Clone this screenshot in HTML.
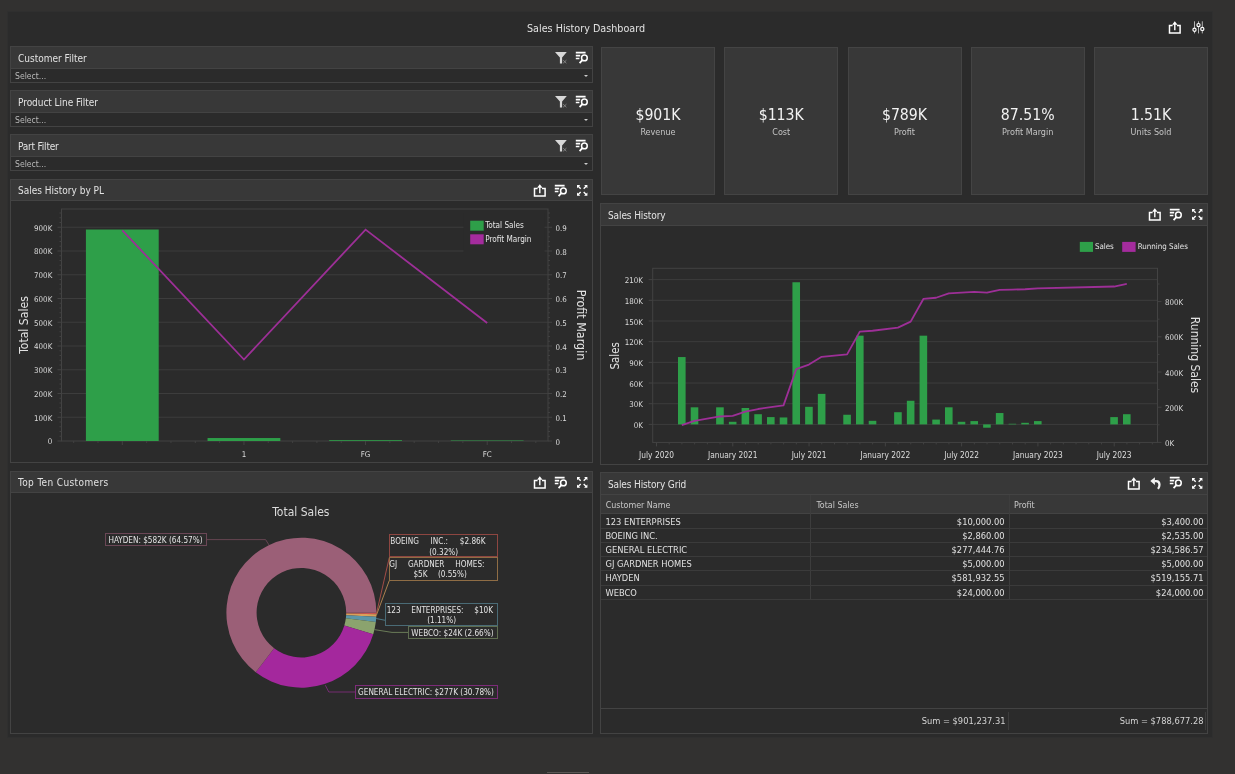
<!DOCTYPE html>
<html><head><meta charset="utf-8"><title>Sales History Dashboard</title>
<style>
html,body{margin:0;padding:0}
body{width:1235px;height:774px;background:#323130;overflow:hidden;position:relative;font-family:"DejaVu Sans Condensed", "Liberation Sans", sans-serif;color:#dedede;font-size:10px}
#inner{position:absolute;left:7px;top:11px;width:1204px;height:725px;background:#2b2b2b;border:1px solid #2f2f2f}
.panel{position:absolute;box-sizing:border-box;border:1px solid #434343;background:#2b2b2b}
.hdr{position:absolute;left:0;top:0;right:0;height:21px;background:#383838;border-bottom:1px solid #434343}
.hdr span{position:absolute;left:7px;top:5px;font-size:10px;line-height:14px;color:#e2e2e2;white-space:nowrap}
.ic{position:absolute;overflow:visible}
.sel{position:absolute;left:0;right:0;top:22px;height:13px;font-size:8.6px;line-height:15px;color:#b9b9b9;padding-left:4px}
.arrow{position:absolute;right:4px;top:5.8px;width:0;height:0;border-left:2.5px solid transparent;border-right:2.5px solid transparent;border-top:2.5px solid #ccc}
.card{position:absolute;top:47px;width:114px;height:148px;box-sizing:border-box;background:#383838;border:1px solid #444;text-align:center}
.card b{display:block;font-weight:normal;font-size:15.7px;line-height:19px;margin-top:57px;color:#f2f2f2}
.card i{display:block;font-style:normal;font-size:9px;line-height:12px;margin-top:2px;color:#c4c4c4}
svg text{font-family:"DejaVu Sans Condensed", "Liberation Sans", sans-serif}
.lbl{position:absolute;box-sizing:border-box;border:1px solid;font-size:8.15px;line-height:10.6px;color:#e4e4e4;padding:0.8px 2px 0 2px;white-space:nowrap;background:#2b2b2b}
.gh{position:absolute;top:22px;height:18px;line-height:20px;font-size:8.85px;color:#c8c8c8;white-space:nowrap}
.gr{position:absolute;left:0;width:606px;height:13.22px;border-bottom:1px solid #3b3b3b;font-size:9.25px;line-height:14.6px;color:#e0e0e0;white-space:nowrap}
.gr span{position:absolute;top:0}
</style></head><body>
<div id="root" style="position:absolute;left:0;top:0;width:1235px;height:774px;will-change:transform">
<div id="inner"></div>
<div style="position:absolute;left:527px;top:22px;font-size:10.7px;line-height:14px;color:#e2e2e2;white-space:nowrap">Sales History Dashboard</div>

<svg class="ic" style="left:1168px;top:21px" width="14" height="14" viewBox="0 0 14 14"><path d="M4.6 4.4H1.5v7.6h10.6V4.4H9" fill="none" stroke="#fff" stroke-width="1.5"/><path d="M6.8 9.2V2.2" stroke="#fff" stroke-width="1.4" fill="none"/><path d="M4.1 3.7L6.8 0.2L9.5 3.7Z" fill="#fff"/></svg>
<svg class="ic" style="left:1192px;top:21px" width="14" height="13" viewBox="0 0 14 13"><path d="M2.5 0.3V12.4M6.5 0.3V12.4M10.3 0.3V12.4" stroke="#c4c4c4" stroke-width="0.9"/><circle cx="2.5" cy="8.8" r="1.6" fill="#2b2b2b" stroke="#fff" stroke-width="1.2"/><circle cx="6.5" cy="4.1" r="1.6" fill="#2b2b2b" stroke="#fff" stroke-width="1.2"/><circle cx="10.3" cy="7.9" r="1.6" fill="#2b2b2b" stroke="#fff" stroke-width="1.2"/></svg>
<div class="panel" style="left:10px;top:46px;width:583px;height:37px"><div class="hdr"><span style="letter-spacing:0px">Customer Filter</span><svg class="ic" style="left:544px;top:5px" width="13" height="12" viewBox="0 0 13 12"><path d="M0 0H11.8L7.1 5.6V11.4H4.9V5.6Z" fill="#d8d8d8"/><path d="M8.2 8.2L11.4 11.2M11.4 8.2L8.2 11.2" stroke="#8a8a8a" stroke-width="0.9"/></svg><svg class="ic" style="left:564px;top:3.6px" width="14" height="14" viewBox="0 0 14 14"><path d="M0.8 1.6H10.6M0.8 4.6H5.2M0.8 7.5H4.4" stroke="#fff" stroke-width="1.6" fill="none"/><circle cx="9.4" cy="6.9" r="2.85" fill="none" stroke="#fff" stroke-width="1.5"/><path d="M7.3 9.2L4.6 12.2" stroke="#fff" stroke-width="1.8" fill="none"/></svg></div><div class="sel">Select...<div class="arrow"></div></div></div>
<div class="panel" style="left:10px;top:90px;width:583px;height:37px"><div class="hdr"><span style="letter-spacing:-0.05px">Product Line Filter</span><svg class="ic" style="left:544px;top:5px" width="13" height="12" viewBox="0 0 13 12"><path d="M0 0H11.8L7.1 5.6V11.4H4.9V5.6Z" fill="#d8d8d8"/><path d="M8.2 8.2L11.4 11.2M11.4 8.2L8.2 11.2" stroke="#8a8a8a" stroke-width="0.9"/></svg><svg class="ic" style="left:564px;top:3.6px" width="14" height="14" viewBox="0 0 14 14"><path d="M0.8 1.6H10.6M0.8 4.6H5.2M0.8 7.5H4.4" stroke="#fff" stroke-width="1.6" fill="none"/><circle cx="9.4" cy="6.9" r="2.85" fill="none" stroke="#fff" stroke-width="1.5"/><path d="M7.3 9.2L4.6 12.2" stroke="#fff" stroke-width="1.8" fill="none"/></svg></div><div class="sel">Select...<div class="arrow"></div></div></div>
<div class="panel" style="left:10px;top:134px;width:583px;height:37px"><div class="hdr"><span style="letter-spacing:-0.2px">Part Filter</span><svg class="ic" style="left:544px;top:5px" width="13" height="12" viewBox="0 0 13 12"><path d="M0 0H11.8L7.1 5.6V11.4H4.9V5.6Z" fill="#d8d8d8"/><path d="M8.2 8.2L11.4 11.2M11.4 8.2L8.2 11.2" stroke="#8a8a8a" stroke-width="0.9"/></svg><svg class="ic" style="left:564px;top:3.6px" width="14" height="14" viewBox="0 0 14 14"><path d="M0.8 1.6H10.6M0.8 4.6H5.2M0.8 7.5H4.4" stroke="#fff" stroke-width="1.6" fill="none"/><circle cx="9.4" cy="6.9" r="2.85" fill="none" stroke="#fff" stroke-width="1.5"/><path d="M7.3 9.2L4.6 12.2" stroke="#fff" stroke-width="1.8" fill="none"/></svg></div><div class="sel">Select...<div class="arrow"></div></div></div>
<div class="card" style="left:601.00px"><b>$901K</b><i>Revenue</i></div>
<div class="card" style="left:724.25px"><b>$113K</b><i>Cost</i></div>
<div class="card" style="left:847.50px"><b>$789K</b><i>Profit</i></div>
<div class="card" style="left:970.75px"><b>87.51%</b><i>Profit Margin</i></div>
<div class="card" style="left:1094.00px"><b>1.51K</b><i>Units Sold</i></div>
<div class="panel" style="left:10px;top:179px;width:583px;height:284px"><div class="hdr" style="height:20px"><span style="top:4px">Sales History by PL</span><svg class="ic" style="left:522.2px;top:3.7px" width="14" height="14" viewBox="0 0 14 14"><path d="M4.6 4.4H1.5v7.6h10.6V4.4H9" fill="none" stroke="#fff" stroke-width="1.5"/><path d="M6.8 9.2V2.2" stroke="#fff" stroke-width="1.4" fill="none"/><path d="M4.1 3.7L6.8 0.2L9.5 3.7Z" fill="#fff"/></svg><svg class="ic" style="left:543px;top:3.8px" width="14" height="14" viewBox="0 0 14 14"><path d="M0.8 1.6H10.6M0.8 4.6H5.2M0.8 7.5H4.4" stroke="#fff" stroke-width="1.6" fill="none"/><circle cx="9.4" cy="6.9" r="2.85" fill="none" stroke="#fff" stroke-width="1.5"/><path d="M7.3 9.2L4.6 12.2" stroke="#fff" stroke-width="1.8" fill="none"/></svg><svg class="ic" style="left:565.9px;top:5.0px" width="10.4" height="10.8" viewBox="0 0 10.4 10.8"><path d="M0 0H3.3L0 3.3ZM10.4 0V3.3L7.1000000000000005 0ZM0 10.8V7.500000000000001L3.3 10.8ZM10.4 10.8H7.1000000000000005L10.4 7.500000000000001Z" fill="#fff"/><path d="M1 1L3.7 3.7M9.4 1L6.7 3.7M1 9.8L3.7 7.1000000000000005M9.4 9.8L6.7 7.1000000000000005" stroke="#fff" stroke-width="1.4"/></svg></div>
<svg style="position:absolute;left:0;top:0" width="581" height="282" viewBox="0 0 581 282"><line x1="50.5" x2="537" y1="237.25" y2="237.25" stroke="#3d3d3d" stroke-width="1"/><line x1="50.5" x2="537" y1="213.5" y2="213.5" stroke="#3d3d3d" stroke-width="1"/><line x1="50.5" x2="537" y1="189.75" y2="189.75" stroke="#3d3d3d" stroke-width="1"/><line x1="50.5" x2="537" y1="166.0" y2="166.0" stroke="#3d3d3d" stroke-width="1"/><line x1="50.5" x2="537" y1="142.25" y2="142.25" stroke="#3d3d3d" stroke-width="1"/><line x1="50.5" x2="537" y1="118.5" y2="118.5" stroke="#3d3d3d" stroke-width="1"/><line x1="50.5" x2="537" y1="94.75" y2="94.75" stroke="#3d3d3d" stroke-width="1"/><line x1="50.5" x2="537" y1="71.0" y2="71.0" stroke="#3d3d3d" stroke-width="1"/><line x1="50.5" x2="537" y1="47.25" y2="47.25" stroke="#3d3d3d" stroke-width="1"/><rect x="50.5" y="29" width="486.5" height="232" fill="none" stroke="#434343" stroke-width="1"/><line x1="46.5" x2="50.5" y1="261.0" y2="261.0" stroke="#434343"/><line x1="537" x2="541" y1="261.0" y2="261.0" stroke="#434343"/><text x="41.3" y="264.4" font-size="7.9" fill="#dcdcdc" text-anchor="end">0</text><text x="544.5" y="264.6" font-size="7.9" fill="#dcdcdc">0</text><line x1="48.5" x2="50.5" y1="256.25" y2="256.25" stroke="#414141"/><line x1="537" x2="539" y1="256.25" y2="256.25" stroke="#414141"/><line x1="48.5" x2="50.5" y1="251.5" y2="251.5" stroke="#414141"/><line x1="537" x2="539" y1="251.5" y2="251.5" stroke="#414141"/><line x1="48.5" x2="50.5" y1="246.75" y2="246.75" stroke="#414141"/><line x1="537" x2="539" y1="246.75" y2="246.75" stroke="#414141"/><line x1="48.5" x2="50.5" y1="242.0" y2="242.0" stroke="#414141"/><line x1="537" x2="539" y1="242.0" y2="242.0" stroke="#414141"/><line x1="46.5" x2="50.5" y1="237.25" y2="237.25" stroke="#434343"/><line x1="537" x2="541" y1="237.25" y2="237.25" stroke="#434343"/><text x="41.3" y="240.65" font-size="7.9" fill="#dcdcdc" text-anchor="end">100K</text><text x="544.5" y="240.85" font-size="7.9" fill="#dcdcdc">0.1</text><line x1="48.5" x2="50.5" y1="232.5" y2="232.5" stroke="#414141"/><line x1="537" x2="539" y1="232.5" y2="232.5" stroke="#414141"/><line x1="48.5" x2="50.5" y1="227.75" y2="227.75" stroke="#414141"/><line x1="537" x2="539" y1="227.75" y2="227.75" stroke="#414141"/><line x1="48.5" x2="50.5" y1="223.0" y2="223.0" stroke="#414141"/><line x1="537" x2="539" y1="223.0" y2="223.0" stroke="#414141"/><line x1="48.5" x2="50.5" y1="218.25" y2="218.25" stroke="#414141"/><line x1="537" x2="539" y1="218.25" y2="218.25" stroke="#414141"/><line x1="46.5" x2="50.5" y1="213.5" y2="213.5" stroke="#434343"/><line x1="537" x2="541" y1="213.5" y2="213.5" stroke="#434343"/><text x="41.3" y="216.9" font-size="7.9" fill="#dcdcdc" text-anchor="end">200K</text><text x="544.5" y="217.1" font-size="7.9" fill="#dcdcdc">0.2</text><line x1="48.5" x2="50.5" y1="208.75" y2="208.75" stroke="#414141"/><line x1="537" x2="539" y1="208.75" y2="208.75" stroke="#414141"/><line x1="48.5" x2="50.5" y1="204.0" y2="204.0" stroke="#414141"/><line x1="537" x2="539" y1="204.0" y2="204.0" stroke="#414141"/><line x1="48.5" x2="50.5" y1="199.25" y2="199.25" stroke="#414141"/><line x1="537" x2="539" y1="199.25" y2="199.25" stroke="#414141"/><line x1="48.5" x2="50.5" y1="194.5" y2="194.5" stroke="#414141"/><line x1="537" x2="539" y1="194.5" y2="194.5" stroke="#414141"/><line x1="46.5" x2="50.5" y1="189.75" y2="189.75" stroke="#434343"/><line x1="537" x2="541" y1="189.75" y2="189.75" stroke="#434343"/><text x="41.3" y="193.15" font-size="7.9" fill="#dcdcdc" text-anchor="end">300K</text><text x="544.5" y="193.35" font-size="7.9" fill="#dcdcdc">0.3</text><line x1="48.5" x2="50.5" y1="185.0" y2="185.0" stroke="#414141"/><line x1="537" x2="539" y1="185.0" y2="185.0" stroke="#414141"/><line x1="48.5" x2="50.5" y1="180.25" y2="180.25" stroke="#414141"/><line x1="537" x2="539" y1="180.25" y2="180.25" stroke="#414141"/><line x1="48.5" x2="50.5" y1="175.5" y2="175.5" stroke="#414141"/><line x1="537" x2="539" y1="175.5" y2="175.5" stroke="#414141"/><line x1="48.5" x2="50.5" y1="170.75" y2="170.75" stroke="#414141"/><line x1="537" x2="539" y1="170.75" y2="170.75" stroke="#414141"/><line x1="46.5" x2="50.5" y1="166.0" y2="166.0" stroke="#434343"/><line x1="537" x2="541" y1="166.0" y2="166.0" stroke="#434343"/><text x="41.3" y="169.4" font-size="7.9" fill="#dcdcdc" text-anchor="end">400K</text><text x="544.5" y="169.6" font-size="7.9" fill="#dcdcdc">0.4</text><line x1="48.5" x2="50.5" y1="161.25" y2="161.25" stroke="#414141"/><line x1="537" x2="539" y1="161.25" y2="161.25" stroke="#414141"/><line x1="48.5" x2="50.5" y1="156.5" y2="156.5" stroke="#414141"/><line x1="537" x2="539" y1="156.5" y2="156.5" stroke="#414141"/><line x1="48.5" x2="50.5" y1="151.75" y2="151.75" stroke="#414141"/><line x1="537" x2="539" y1="151.75" y2="151.75" stroke="#414141"/><line x1="48.5" x2="50.5" y1="147.0" y2="147.0" stroke="#414141"/><line x1="537" x2="539" y1="147.0" y2="147.0" stroke="#414141"/><line x1="46.5" x2="50.5" y1="142.25" y2="142.25" stroke="#434343"/><line x1="537" x2="541" y1="142.25" y2="142.25" stroke="#434343"/><text x="41.3" y="145.65" font-size="7.9" fill="#dcdcdc" text-anchor="end">500K</text><text x="544.5" y="145.85" font-size="7.9" fill="#dcdcdc">0.5</text><line x1="48.5" x2="50.5" y1="137.5" y2="137.5" stroke="#414141"/><line x1="537" x2="539" y1="137.5" y2="137.5" stroke="#414141"/><line x1="48.5" x2="50.5" y1="132.75" y2="132.75" stroke="#414141"/><line x1="537" x2="539" y1="132.75" y2="132.75" stroke="#414141"/><line x1="48.5" x2="50.5" y1="128.0" y2="128.0" stroke="#414141"/><line x1="537" x2="539" y1="128.0" y2="128.0" stroke="#414141"/><line x1="48.5" x2="50.5" y1="123.25" y2="123.25" stroke="#414141"/><line x1="537" x2="539" y1="123.25" y2="123.25" stroke="#414141"/><line x1="46.5" x2="50.5" y1="118.5" y2="118.5" stroke="#434343"/><line x1="537" x2="541" y1="118.5" y2="118.5" stroke="#434343"/><text x="41.3" y="121.9" font-size="7.9" fill="#dcdcdc" text-anchor="end">600K</text><text x="544.5" y="122.1" font-size="7.9" fill="#dcdcdc">0.6</text><line x1="48.5" x2="50.5" y1="113.75" y2="113.75" stroke="#414141"/><line x1="537" x2="539" y1="113.75" y2="113.75" stroke="#414141"/><line x1="48.5" x2="50.5" y1="109.0" y2="109.0" stroke="#414141"/><line x1="537" x2="539" y1="109.0" y2="109.0" stroke="#414141"/><line x1="48.5" x2="50.5" y1="104.25" y2="104.25" stroke="#414141"/><line x1="537" x2="539" y1="104.25" y2="104.25" stroke="#414141"/><line x1="48.5" x2="50.5" y1="99.5" y2="99.5" stroke="#414141"/><line x1="537" x2="539" y1="99.5" y2="99.5" stroke="#414141"/><line x1="46.5" x2="50.5" y1="94.75" y2="94.75" stroke="#434343"/><line x1="537" x2="541" y1="94.75" y2="94.75" stroke="#434343"/><text x="41.3" y="98.15" font-size="7.9" fill="#dcdcdc" text-anchor="end">700K</text><text x="544.5" y="98.35" font-size="7.9" fill="#dcdcdc">0.7</text><line x1="48.5" x2="50.5" y1="90.0" y2="90.0" stroke="#414141"/><line x1="537" x2="539" y1="90.0" y2="90.0" stroke="#414141"/><line x1="48.5" x2="50.5" y1="85.25" y2="85.25" stroke="#414141"/><line x1="537" x2="539" y1="85.25" y2="85.25" stroke="#414141"/><line x1="48.5" x2="50.5" y1="80.5" y2="80.5" stroke="#414141"/><line x1="537" x2="539" y1="80.5" y2="80.5" stroke="#414141"/><line x1="48.5" x2="50.5" y1="75.75" y2="75.75" stroke="#414141"/><line x1="537" x2="539" y1="75.75" y2="75.75" stroke="#414141"/><line x1="46.5" x2="50.5" y1="71.0" y2="71.0" stroke="#434343"/><line x1="537" x2="541" y1="71.0" y2="71.0" stroke="#434343"/><text x="41.3" y="74.4" font-size="7.9" fill="#dcdcdc" text-anchor="end">800K</text><text x="544.5" y="74.6" font-size="7.9" fill="#dcdcdc">0.8</text><line x1="48.5" x2="50.5" y1="66.25" y2="66.25" stroke="#414141"/><line x1="537" x2="539" y1="66.25" y2="66.25" stroke="#414141"/><line x1="48.5" x2="50.5" y1="61.5" y2="61.5" stroke="#414141"/><line x1="537" x2="539" y1="61.5" y2="61.5" stroke="#414141"/><line x1="48.5" x2="50.5" y1="56.75" y2="56.75" stroke="#414141"/><line x1="537" x2="539" y1="56.75" y2="56.75" stroke="#414141"/><line x1="48.5" x2="50.5" y1="52.0" y2="52.0" stroke="#414141"/><line x1="537" x2="539" y1="52.0" y2="52.0" stroke="#414141"/><line x1="46.5" x2="50.5" y1="47.25" y2="47.25" stroke="#434343"/><line x1="537" x2="541" y1="47.25" y2="47.25" stroke="#434343"/><text x="41.3" y="50.65" font-size="7.9" fill="#dcdcdc" text-anchor="end">900K</text><text x="544.5" y="50.85" font-size="7.9" fill="#dcdcdc">0.9</text><line x1="48.5" x2="50.5" y1="42.5" y2="42.5" stroke="#414141"/><line x1="537" x2="539" y1="42.5" y2="42.5" stroke="#414141"/><line x1="48.5" x2="50.5" y1="37.75" y2="37.75" stroke="#414141"/><line x1="537" x2="539" y1="37.75" y2="37.75" stroke="#414141"/><line x1="48.5" x2="50.5" y1="33.0" y2="33.0" stroke="#414141"/><line x1="537" x2="539" y1="33.0" y2="33.0" stroke="#414141"/><rect x="74.91" y="49.51" width="72.8" height="211.49" fill="#2e9f49"/><rect x="196.54" y="258.03" width="72.8" height="2.97" fill="#2e9f49"/><rect x="318.16" y="260.17" width="72.8" height="0.83" fill="#2e9f49"/><rect x="439.79" y="260.52" width="72.8" height="0.48" fill="#2e9f49"/><line x1="111.31" x2="111.31" y1="261" y2="265" stroke="#434343"/><line x1="62.66" x2="62.66" y1="261" y2="263" stroke="#414141"/><line x1="86.99" x2="86.99" y1="261" y2="263" stroke="#414141"/><line x1="135.64" x2="135.64" y1="261" y2="263" stroke="#414141"/><line x1="159.96" x2="159.96" y1="261" y2="263" stroke="#414141"/><line x1="232.94" x2="232.94" y1="261" y2="265" stroke="#434343"/><line x1="184.29" x2="184.29" y1="261" y2="263" stroke="#414141"/><line x1="208.61" x2="208.61" y1="261" y2="263" stroke="#414141"/><line x1="257.26" x2="257.26" y1="261" y2="263" stroke="#414141"/><line x1="281.59" x2="281.59" y1="261" y2="263" stroke="#414141"/><line x1="354.56" x2="354.56" y1="261" y2="265" stroke="#434343"/><line x1="305.91" x2="305.91" y1="261" y2="263" stroke="#414141"/><line x1="330.24" x2="330.24" y1="261" y2="263" stroke="#414141"/><line x1="378.89" x2="378.89" y1="261" y2="263" stroke="#414141"/><line x1="403.21" x2="403.21" y1="261" y2="263" stroke="#414141"/><line x1="476.19" x2="476.19" y1="261" y2="265" stroke="#434343"/><line x1="427.54" x2="427.54" y1="261" y2="263" stroke="#414141"/><line x1="451.86" x2="451.86" y1="261" y2="263" stroke="#414141"/><line x1="500.51" x2="500.51" y1="261" y2="263" stroke="#414141"/><line x1="524.84" x2="524.84" y1="261" y2="263" stroke="#414141"/><text x="232.94" y="277" font-size="7.9" fill="#dcdcdc" text-anchor="middle">1</text><text x="354.56" y="277" font-size="7.9" fill="#dcdcdc" text-anchor="middle">FG</text><text x="476.19" y="277" font-size="7.9" fill="#dcdcdc" text-anchor="middle">FC</text><polyline points="111.31,50.34 232.94,179.54 354.56,49.62 476.19,142.96" fill="none" stroke="#9d2f97" stroke-width="1.8"/><rect x="452.5" y="33" width="81" height="40" fill="#2b2b2b"/><rect x="459.2" y="40.7" width="13.5" height="10" fill="#2e9f49"/><rect x="459.2" y="54.3" width="13.5" height="10" fill="#a42c9d"/><text x="474.2" y="47.8" font-size="8.15" fill="#e6e6e6">Total Sales</text><text x="474.2" y="61.9" font-size="8.15" fill="#e6e6e6">Profit Margin</text><text transform="translate(16.9,145) rotate(-90)" font-size="12.1" fill="#e2e2e2" text-anchor="middle">Total Sales</text><text transform="translate(565.7,145) rotate(90)" font-size="12.4" fill="#e2e2e2" text-anchor="middle">Profit Margin</text></svg>
</div>
<div class="panel" style="left:600px;top:203px;width:608px;height:262px"><div class="hdr"><span style="letter-spacing:-0.1px">Sales History</span><svg class="ic" style="left:547.2px;top:3.7px" width="14" height="14" viewBox="0 0 14 14"><path d="M4.6 4.4H1.5v7.6h10.6V4.4H9" fill="none" stroke="#fff" stroke-width="1.5"/><path d="M6.8 9.2V2.2" stroke="#fff" stroke-width="1.4" fill="none"/><path d="M4.1 3.7L6.8 0.2L9.5 3.7Z" fill="#fff"/></svg><svg class="ic" style="left:568px;top:3.8px" width="14" height="14" viewBox="0 0 14 14"><path d="M0.8 1.6H10.6M0.8 4.6H5.2M0.8 7.5H4.4" stroke="#fff" stroke-width="1.6" fill="none"/><circle cx="9.4" cy="6.9" r="2.85" fill="none" stroke="#fff" stroke-width="1.5"/><path d="M7.3 9.2L4.6 12.2" stroke="#fff" stroke-width="1.8" fill="none"/></svg><svg class="ic" style="left:590.9px;top:5.0px" width="10.4" height="10.8" viewBox="0 0 10.4 10.8"><path d="M0 0H3.3L0 3.3ZM10.4 0V3.3L7.1000000000000005 0ZM0 10.8V7.500000000000001L3.3 10.8ZM10.4 10.8H7.1000000000000005L10.4 7.500000000000001Z" fill="#fff"/><path d="M1 1L3.7 3.7M9.4 1L6.7 3.7M1 9.8L3.7 7.1000000000000005M9.4 9.8L6.7 7.1000000000000005" stroke="#fff" stroke-width="1.4"/></svg></div>
<svg style="position:absolute;left:0;top:0" width="606" height="260" viewBox="0 0 606 260"><line x1="51.7" x2="556.5" y1="220.4" y2="220.4" stroke="#3d3d3d"/><line x1="47.7" x2="51.7" y1="220.4" y2="220.4" stroke="#434343"/><text x="42" y="223.9" font-size="7.9" fill="#dcdcdc" text-anchor="end">0K</text><line x1="51.7" x2="556.5" y1="199.72" y2="199.72" stroke="#3d3d3d"/><line x1="47.7" x2="51.7" y1="199.72" y2="199.72" stroke="#434343"/><text x="42" y="203.22" font-size="7.9" fill="#dcdcdc" text-anchor="end">30K</text><line x1="51.7" x2="556.5" y1="179.04" y2="179.04" stroke="#3d3d3d"/><line x1="47.7" x2="51.7" y1="179.04" y2="179.04" stroke="#434343"/><text x="42" y="182.54" font-size="7.9" fill="#dcdcdc" text-anchor="end">60K</text><line x1="51.7" x2="556.5" y1="158.36" y2="158.36" stroke="#3d3d3d"/><line x1="47.7" x2="51.7" y1="158.36" y2="158.36" stroke="#434343"/><text x="42" y="161.86" font-size="7.9" fill="#dcdcdc" text-anchor="end">90K</text><line x1="51.7" x2="556.5" y1="137.68" y2="137.68" stroke="#3d3d3d"/><line x1="47.7" x2="51.7" y1="137.68" y2="137.68" stroke="#434343"/><text x="42" y="141.18" font-size="7.9" fill="#dcdcdc" text-anchor="end">120K</text><line x1="51.7" x2="556.5" y1="117.0" y2="117.0" stroke="#3d3d3d"/><line x1="47.7" x2="51.7" y1="117.0" y2="117.0" stroke="#434343"/><text x="42" y="120.5" font-size="7.9" fill="#dcdcdc" text-anchor="end">150K</text><line x1="51.7" x2="556.5" y1="96.32" y2="96.32" stroke="#3d3d3d"/><line x1="47.7" x2="51.7" y1="96.32" y2="96.32" stroke="#434343"/><text x="42" y="99.82" font-size="7.9" fill="#dcdcdc" text-anchor="end">180K</text><line x1="51.7" x2="556.5" y1="75.64" y2="75.64" stroke="#3d3d3d"/><line x1="47.7" x2="51.7" y1="75.64" y2="75.64" stroke="#434343"/><text x="42" y="79.14" font-size="7.9" fill="#dcdcdc" text-anchor="end">210K</text><rect x="51.7" y="64.3" width="504.8" height="174.1" fill="none" stroke="#434343"/><line x1="556.5" x2="560.5" y1="238.4" y2="238.4" stroke="#434343"/><text x="564" y="241.9" font-size="7.9" fill="#dcdcdc">0K</text><line x1="556.5" x2="558.5" y1="220.8" y2="220.8" stroke="#414141"/><line x1="556.5" x2="560.5" y1="203.2" y2="203.2" stroke="#434343"/><text x="564" y="206.7" font-size="7.9" fill="#dcdcdc">200K</text><line x1="556.5" x2="558.5" y1="185.6" y2="185.6" stroke="#414141"/><line x1="556.5" x2="560.5" y1="168.0" y2="168.0" stroke="#434343"/><text x="564" y="171.5" font-size="7.9" fill="#dcdcdc">400K</text><line x1="556.5" x2="558.5" y1="150.4" y2="150.4" stroke="#414141"/><line x1="556.5" x2="560.5" y1="132.8" y2="132.8" stroke="#434343"/><text x="564" y="136.3" font-size="7.9" fill="#dcdcdc">600K</text><line x1="556.5" x2="558.5" y1="115.2" y2="115.2" stroke="#414141"/><line x1="556.5" x2="560.5" y1="97.6" y2="97.6" stroke="#434343"/><text x="564" y="101.1" font-size="7.9" fill="#dcdcdc">800K</text><line x1="556.5" x2="558.5" y1="80.0" y2="80.0" stroke="#414141"/><rect x="77.0" y="153.05" width="7.6" height="67.35" fill="#2e9f49"/><rect x="89.71" y="203.3" width="7.6" height="17.1" fill="#2e9f49"/><rect x="115.14" y="203.3" width="7.6" height="17.1" fill="#2e9f49"/><rect x="127.86" y="217.78" width="7.6" height="2.62" fill="#2e9f49"/><rect x="140.57" y="203.99" width="7.6" height="16.41" fill="#2e9f49"/><rect x="153.28" y="210.2" width="7.6" height="10.2" fill="#2e9f49"/><rect x="166.0" y="213.09" width="7.6" height="7.31" fill="#2e9f49"/><rect x="178.71" y="213.44" width="7.6" height="6.96" fill="#2e9f49"/><rect x="191.43" y="78.26" width="7.6" height="142.14" fill="#2e9f49"/><rect x="204.14" y="202.82" width="7.6" height="17.58" fill="#2e9f49"/><rect x="216.85" y="189.86" width="7.6" height="30.54" fill="#2e9f49"/><rect x="242.28" y="210.75" width="7.6" height="9.65" fill="#2e9f49"/><rect x="255.0" y="131.68" width="7.6" height="88.72" fill="#2e9f49"/><rect x="267.71" y="216.82" width="7.6" height="3.58" fill="#2e9f49"/><rect x="293.14" y="208.2" width="7.6" height="12.2" fill="#2e9f49"/><rect x="305.85" y="196.76" width="7.6" height="23.64" fill="#2e9f49"/><rect x="318.57" y="131.68" width="7.6" height="88.72" fill="#2e9f49"/><rect x="331.28" y="215.57" width="7.6" height="4.83" fill="#2e9f49"/><rect x="343.99" y="203.3" width="7.6" height="17.1" fill="#2e9f49"/><rect x="356.71" y="217.78" width="7.6" height="2.62" fill="#2e9f49"/><rect x="369.42" y="217.09" width="7.6" height="3.31" fill="#2e9f49"/><rect x="382.14" y="220.4" width="7.6" height="3.31" fill="#2e9f49"/><rect x="394.85" y="209.03" width="7.6" height="11.37" fill="#2e9f49"/><rect x="407.56" y="219.78" width="7.6" height="0.62" fill="#2e9f49"/><rect x="420.28" y="218.81" width="7.6" height="1.59" fill="#2e9f49"/><rect x="432.99" y="217.09" width="7.6" height="3.31" fill="#2e9f49"/><rect x="509.28" y="213.09" width="7.6" height="7.31" fill="#2e9f49"/><rect x="521.99" y="210.2" width="7.6" height="10.2" fill="#2e9f49"/><polyline points="80.8,221.2 93.51,216.84 118.94,212.48 131.66,211.81 144.37,207.62 157.08,205.01 169.8,203.15 182.51,201.37 195.23,165.08 207.94,160.59 220.65,152.79 246.08,150.33 258.8,127.68 271.51,126.76 296.94,123.65 309.65,117.61 322.37,94.96 335.08,93.73 347.79,89.36 360.51,88.69 373.22,87.85 385.94,88.69 398.65,85.79 411.36,85.63 424.08,85.23 436.79,84.38 513.08,82.52 525.79,79.91" fill="none" stroke="#9d2f97" stroke-width="1.8" stroke-linejoin="round"/><line x1="55.5" x2="55.5" y1="238.4" y2="242.4" stroke="#434343"/><text x="55.5" y="254" font-size="8.3" fill="#dcdcdc" text-anchor="middle">July 2020</text><line x1="68.21" x2="68.21" y1="238.4" y2="240.4" stroke="#414141"/><line x1="80.93" x2="80.93" y1="238.4" y2="240.4" stroke="#414141"/><line x1="93.64" x2="93.64" y1="238.4" y2="240.4" stroke="#414141"/><line x1="106.36" x2="106.36" y1="238.4" y2="240.4" stroke="#414141"/><line x1="119.07" x2="119.07" y1="238.4" y2="240.4" stroke="#414141"/><line x1="131.78" x2="131.78" y1="238.4" y2="242.4" stroke="#434343"/><text x="131.78" y="254" font-size="8.3" fill="#dcdcdc" text-anchor="middle">January 2021</text><line x1="144.5" x2="144.5" y1="238.4" y2="240.4" stroke="#414141"/><line x1="157.21" x2="157.21" y1="238.4" y2="240.4" stroke="#414141"/><line x1="169.93" x2="169.93" y1="238.4" y2="240.4" stroke="#414141"/><line x1="182.64" x2="182.64" y1="238.4" y2="240.4" stroke="#414141"/><line x1="195.35" x2="195.35" y1="238.4" y2="240.4" stroke="#414141"/><line x1="208.07" x2="208.07" y1="238.4" y2="242.4" stroke="#434343"/><text x="208.07" y="254" font-size="8.3" fill="#dcdcdc" text-anchor="middle">July 2021</text><line x1="220.78" x2="220.78" y1="238.4" y2="240.4" stroke="#414141"/><line x1="233.5" x2="233.5" y1="238.4" y2="240.4" stroke="#414141"/><line x1="246.21" x2="246.21" y1="238.4" y2="240.4" stroke="#414141"/><line x1="258.92" x2="258.92" y1="238.4" y2="240.4" stroke="#414141"/><line x1="271.64" x2="271.64" y1="238.4" y2="240.4" stroke="#414141"/><line x1="284.35" x2="284.35" y1="238.4" y2="242.4" stroke="#434343"/><text x="284.35" y="254" font-size="8.3" fill="#dcdcdc" text-anchor="middle">January 2022</text><line x1="297.07" x2="297.07" y1="238.4" y2="240.4" stroke="#414141"/><line x1="309.78" x2="309.78" y1="238.4" y2="240.4" stroke="#414141"/><line x1="322.49" x2="322.49" y1="238.4" y2="240.4" stroke="#414141"/><line x1="335.21" x2="335.21" y1="238.4" y2="240.4" stroke="#414141"/><line x1="347.92" x2="347.92" y1="238.4" y2="240.4" stroke="#414141"/><line x1="360.64" x2="360.64" y1="238.4" y2="242.4" stroke="#434343"/><text x="360.64" y="254" font-size="8.3" fill="#dcdcdc" text-anchor="middle">July 2022</text><line x1="373.35" x2="373.35" y1="238.4" y2="240.4" stroke="#414141"/><line x1="386.06" x2="386.06" y1="238.4" y2="240.4" stroke="#414141"/><line x1="398.78" x2="398.78" y1="238.4" y2="240.4" stroke="#414141"/><line x1="411.49" x2="411.49" y1="238.4" y2="240.4" stroke="#414141"/><line x1="424.21" x2="424.21" y1="238.4" y2="240.4" stroke="#414141"/><line x1="436.92" x2="436.92" y1="238.4" y2="242.4" stroke="#434343"/><text x="436.92" y="254" font-size="8.3" fill="#dcdcdc" text-anchor="middle">January 2023</text><line x1="449.63" x2="449.63" y1="238.4" y2="240.4" stroke="#414141"/><line x1="462.35" x2="462.35" y1="238.4" y2="240.4" stroke="#414141"/><line x1="475.06" x2="475.06" y1="238.4" y2="240.4" stroke="#414141"/><line x1="487.78" x2="487.78" y1="238.4" y2="240.4" stroke="#414141"/><line x1="500.49" x2="500.49" y1="238.4" y2="240.4" stroke="#414141"/><line x1="513.2" x2="513.2" y1="238.4" y2="242.4" stroke="#434343"/><text x="513.2" y="254" font-size="8.3" fill="#dcdcdc" text-anchor="middle">July 2023</text><line x1="525.92" x2="525.92" y1="238.4" y2="240.4" stroke="#414141"/><line x1="538.63" x2="538.63" y1="238.4" y2="240.4" stroke="#414141"/><line x1="551.35" x2="551.35" y1="238.4" y2="240.4" stroke="#414141"/><rect x="478.8" y="37.9" width="13.2" height="10" fill="#2e9f49"/><rect x="521.2" y="37.9" width="13.4" height="10" fill="#a42c9d"/><text x="493.9" y="44.7" font-size="7.9" fill="#e6e6e6">Sales</text><text x="536.7" y="44.7" font-size="7.9" fill="#e6e6e6">Running Sales</text><text transform="translate(17.6,151.8) rotate(-90)" font-size="11.4" fill="#e2e2e2" text-anchor="middle">Sales</text><text transform="translate(589.5,151) rotate(90)" font-size="12" fill="#e2e2e2" text-anchor="middle">Running Sales</text></svg>
</div>
<div class="panel" style="left:10px;top:471px;width:583px;height:263px"><div class="hdr" style="height:20px"><span style="top:4px;letter-spacing:0.38px">Top Ten Customers</span><svg class="ic" style="left:522.2px;top:3.7px" width="14" height="14" viewBox="0 0 14 14"><path d="M4.6 4.4H1.5v7.6h10.6V4.4H9" fill="none" stroke="#fff" stroke-width="1.5"/><path d="M6.8 9.2V2.2" stroke="#fff" stroke-width="1.4" fill="none"/><path d="M4.1 3.7L6.8 0.2L9.5 3.7Z" fill="#fff"/></svg><svg class="ic" style="left:543px;top:3.8px" width="14" height="14" viewBox="0 0 14 14"><path d="M0.8 1.6H10.6M0.8 4.6H5.2M0.8 7.5H4.4" stroke="#fff" stroke-width="1.6" fill="none"/><circle cx="9.4" cy="6.9" r="2.85" fill="none" stroke="#fff" stroke-width="1.5"/><path d="M7.3 9.2L4.6 12.2" stroke="#fff" stroke-width="1.8" fill="none"/></svg><svg class="ic" style="left:565.9px;top:5.0px" width="10.4" height="10.8" viewBox="0 0 10.4 10.8"><path d="M0 0H3.3L0 3.3ZM10.4 0V3.3L7.1000000000000005 0ZM0 10.8V7.500000000000001L3.3 10.8ZM10.4 10.8H7.1000000000000005L10.4 7.500000000000001Z" fill="#fff"/><path d="M1 1L3.7 3.7M9.4 1L6.7 3.7M1 9.8L3.7 7.1000000000000005M9.4 9.8L6.7 7.1000000000000005" stroke="#fff" stroke-width="1.4"/></svg></div>
<svg style="position:absolute;left:0;top:0" width="581" height="261" viewBox="0 0 581 261"><path d="M365.4 140.7A75 75 0 0 1 365.38 142.21L335.19 141.6A44.8 44.8 0 0 0 335.2 140.7Z" fill="#c9564f"/><path d="M365.38 142.21A75 75 0 0 1 365.29 144.8L335.13 143.15A44.8 44.8 0 0 0 335.19 141.6Z" fill="#d9a05b"/><path d="M365.29 144.8A75 75 0 0 1 364.82 150.01L334.85 146.26A44.8 44.8 0 0 0 335.13 143.15Z" fill="#5b96a8"/><path d="M364.82 150.01A75 75 0 0 1 362.23 162.26L333.31 153.58A44.8 44.8 0 0 0 334.85 146.26Z" fill="#8ba36e"/><path d="M362.23 162.26A75 75 0 0 1 244.72 200.18L263.11 176.23A44.8 44.8 0 0 0 333.31 153.58Z" fill="#a4289d"/><path d="M244.72 200.18A75 75 0 1 1 365.4 140.7L335.2 140.7A44.8 44.8 0 1 0 263.11 176.23Z" fill="#9b5f77"/><polyline points="195.3,67.6 254.6,67.6 258,73" fill="none" stroke="#6b4756" stroke-width="0.9"/><polyline points="365.4,141.8 378.3,85.5" fill="none" stroke="#b0504a" stroke-width="0.9"/><polyline points="365.3,143.5 378.3,108.5" fill="none" stroke="#b98a52" stroke-width="0.9"/><polyline points="365.1,146.5 374.2,148.3" fill="none" stroke="#4f7f8e" stroke-width="0.9"/><polyline points="363.3,157.6 381,160.4 397.3,160.4" fill="none" stroke="#71845c" stroke-width="0.9"/><polyline points="314.3,213.2 317.8,220 344.1,220" fill="none" stroke="#7d2c79" stroke-width="0.9"/><text x="289.9" y="44.4" font-size="12" fill="#dcdcdc" text-anchor="middle">Total Sales</text></svg>
<div class="lbl" style="left:94.4px;top:61.3px;width:101.2px;height:12.7px;border-color:#6b4756;">HAYDEN: $582K (64.57%)</div>
<div class="lbl" style="left:378.3px;top:62.4px;width:108.7px;height:23.0px;border-color:#8e4641;white-space:normal;padding:0.8px 0 0 0;"><div style="text-align-last:justify;margin-right:11.5px">BOEING INC.: $2.86K</div><div style="text-align:center">(0.32%)</div></div>
<div class="lbl" style="left:378.3px;top:85.0px;width:108.7px;height:24.0px;border-color:#8f6d45;white-space:normal;padding:0.8px 0 0 0;"><div style="text-align-last:justify;margin-right:12.5px;margin-left:-1px">GJ GARDNER HOMES:</div><div style="text-align:center;word-spacing:8px;margin-right:7px">$5K (0.55%)</div></div>
<div class="lbl" style="left:374.2px;top:131.0px;width:112.8px;height:23.4px;border-color:#4a6b76;white-space:normal;padding:0.8px 0 0 0;"><div style="text-align-last:justify;margin-right:4px;margin-left:0.5px">123 ENTERPRISES: $10K</div><div style="text-align:center">(1.11%)</div></div>
<div class="lbl" style="left:397.3px;top:154.0px;width:89.7px;height:13.2px;border-color:#5f6e51;">WEBCO: $24K (2.66%)</div>
<div class="lbl" style="left:344.1px;top:213.2px;width:142.9px;height:13.8px;border-color:#7d2c79;">GENERAL ELECTRIC: $277K (30.78%)</div>
</div>
<div class="panel" style="left:600px;top:472px;width:608px;height:262px"><div class="hdr"><span style="letter-spacing:-0.13px">Sales History Grid</span><svg class="ic" style="left:526.2px;top:3.7px" width="14" height="14" viewBox="0 0 14 14"><path d="M4.6 4.4H1.5v7.6h10.6V4.4H9" fill="none" stroke="#fff" stroke-width="1.5"/><path d="M6.8 9.2V2.2" stroke="#fff" stroke-width="1.4" fill="none"/><path d="M4.1 3.7L6.8 0.2L9.5 3.7Z" fill="#fff"/></svg><svg class="ic" style="left:548.6px;top:3.5px" width="13" height="13" viewBox="0 0 13 13"><path d="M0.3 4.1L4.9 0.2V8Z" fill="#f4f4f4"/><path d="M4.5 4.1H6.3C8.8 4.1 9.5 6.2 9.5 7.8C9.5 9.6 8.9 10.8 8 11.9" fill="none" stroke="#f4f4f4" stroke-width="2.2"/></svg><svg class="ic" style="left:568px;top:3.1px" width="14" height="14" viewBox="0 0 14 14"><path d="M0.8 1.6H10.6M0.8 4.6H5.2M0.8 7.5H4.4" stroke="#fff" stroke-width="1.6" fill="none"/><circle cx="9.4" cy="6.9" r="2.85" fill="none" stroke="#fff" stroke-width="1.5"/><path d="M7.3 9.2L4.6 12.2" stroke="#fff" stroke-width="1.8" fill="none"/></svg><svg class="ic" style="left:590.9px;top:5.0px" width="10.4" height="10.8" viewBox="0 0 10.4 10.8"><path d="M0 0H3.3L0 3.3ZM10.4 0V3.3L7.1000000000000005 0ZM0 10.8V7.500000000000001L3.3 10.8ZM10.4 10.8H7.1000000000000005L10.4 7.500000000000001Z" fill="#fff"/><path d="M1 1L3.7 3.7M9.4 1L6.7 3.7M1 9.8L3.7 7.1000000000000005M9.4 9.8L6.7 7.1000000000000005" stroke="#fff" stroke-width="1.4"/></svg></div>
<div style="position:absolute;left:0;top:22px;width:606px;height:18px;background:#383838;border-bottom:1px solid #434343;box-sizing:content-box"></div><div style="position:absolute;left:208.6px;top:22px;width:1px;height:104.5px;background:#3d3d3d"></div><div style="position:absolute;left:407.6px;top:22px;width:1px;height:104.5px;background:#3d3d3d"></div><div class="gh" style="left:4.7px">Customer Name</div><div class="gh" style="left:215.5px">Total Sales</div><div class="gh" style="left:413px">Profit</div><div class="gr" style="top:41.50px"><span style="left:4.5px">123 ENTERPRISES</span><span style="right:202.5px">$10,000.00</span><span style="right:3.5px">$3,400.00</span></div><div class="gr" style="top:55.72px"><span style="left:4.5px">BOEING INC.</span><span style="right:202.5px">$2,860.00</span><span style="right:3.5px">$2,535.00</span></div><div class="gr" style="top:69.94px"><span style="left:4.5px">GENERAL ELECTRIC</span><span style="right:202.5px">$277,444.76</span><span style="right:3.5px">$234,586.57</span></div><div class="gr" style="top:84.16px"><span style="left:4.5px">GJ GARDNER HOMES</span><span style="right:202.5px">$5,000.00</span><span style="right:3.5px">$5,000.00</span></div><div class="gr" style="top:98.38px"><span style="left:4.5px">HAYDEN</span><span style="right:202.5px">$581,932.55</span><span style="right:3.5px">$519,155.71</span></div><div class="gr" style="top:112.60px"><span style="left:4.5px">WEBCO</span><span style="right:202.5px">$24,000.00</span><span style="right:3.5px">$24,000.00</span></div>
<div style="position:absolute;left:0;right:0;top:235px;height:25px;border-top:1px solid #434343;font-size:9.25px;line-height:24.6px;color:#d4d4d4"><span style="position:absolute;right:201.5px">Sum = $901,237.31</span><span style="position:absolute;right:3.5px">Sum = $788,677.28</span><i style="position:absolute;left:407px;top:3px;height:18px;border-left:1px solid #3c3c3c"></i><i style="position:absolute;right:1px;top:3px;height:18px;border-left:1px solid #3c3c3c"></i></div>
</div>
<div style="position:absolute;left:547px;top:772px;width:42px;height:1px;background:#5a5654"></div>
</div></body></html>
